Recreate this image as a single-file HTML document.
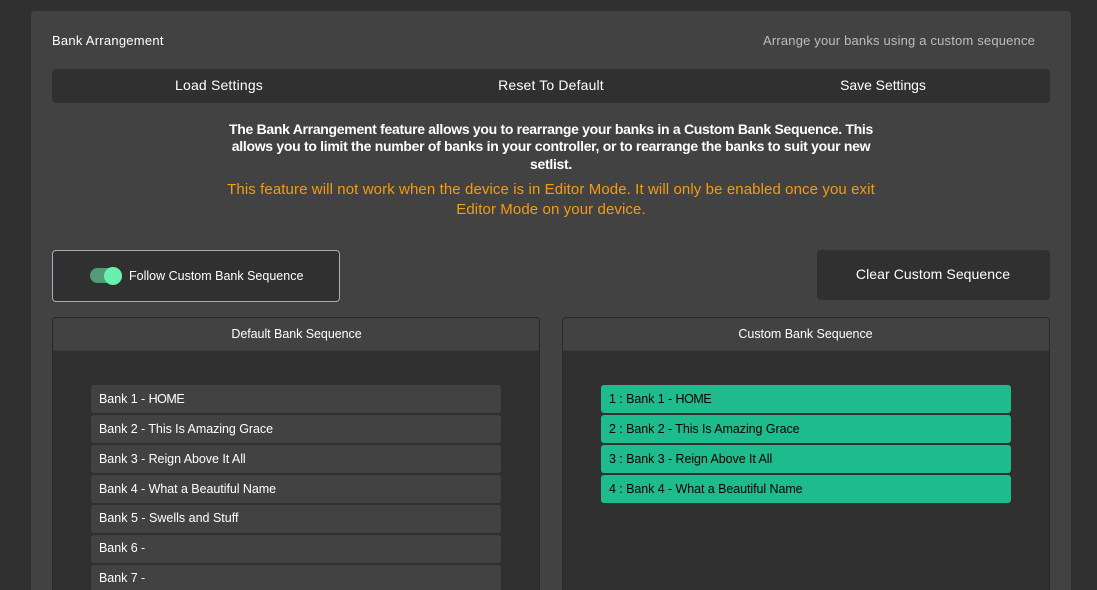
<!DOCTYPE html>
<html>
<head>
<meta charset="utf-8">
<style>
html,body{margin:0;padding:0;width:1097px;height:590px;overflow:hidden;background:#303030;}
body{position:relative;font-family:"Liberation Sans",sans-serif;color:#fff;}
div{position:absolute;box-sizing:border-box;}
.t{white-space:nowrap;line-height:16px;}
.c{transform:translateX(-50%);}
.card{left:31px;top:11px;width:1040px;height:600px;background:#424242;border-radius:4px;}
.bar{background:#303030;border-radius:4px;}
.panel{top:317px;width:488px;height:290px;background:#303030;border:1px solid #292929;border-radius:4px;overflow:hidden;}
.head{left:0;top:0;width:486px;height:33px;background:#424242;border-bottom:1px solid #3a3a3a;}
.i{left:91px;width:410px;height:28px;background:#424242;border-radius:3px;}
.g{left:601px;width:410px;height:28px;background:#1ebc8c;border-radius:3px;}
.it{font-size:12.5px;letter-spacing:-.05px;color:#fff;}
.gt{font-size:12.5px;letter-spacing:-.07px;color:#000;}
.n{letter-spacing:-.45px;}
</style>
</head>
<body>
<div class="card"></div>
<div class="t" style="left:52px;top:33px;font-size:13px;letter-spacing:.25px">Bank Arrangement</div>
<div class="t" style="left:763px;top:33px;font-size:13px;letter-spacing:.18px;color:#bdbdbd">Arrange your banks using a custom sequence</div>

<div class="bar" style="left:52px;top:69px;width:998px;height:34px"></div>
<div class="t c" style="left:219px;top:77px;font-size:14px;letter-spacing:.18px">Load Settings</div>
<div class="t c" style="left:551px;top:77px;font-size:14px;letter-spacing:.15px">Reset To Default</div>
<div class="t c" style="left:883px;top:77px;font-size:14px;letter-spacing:-.05px">Save Settings</div>

<div class="t c" style="left:551px;top:120.5px;font-size:14px;line-height:17.5px;font-weight:bold;letter-spacing:-.3px;text-align:center">The Bank Arrangement feature allows you to rearrange your banks in a Custom Bank Sequence. This<br>allows you to limit the number of banks in your controller, or to rearrange the banks to suit your new<br>setlist.</div>
<div class="t c" style="left:551px;top:180px;font-size:15px;line-height:20px;color:#f39c12;letter-spacing:.1px;text-align:center">This feature will not work when the device is in Editor Mode. It will only be enabled once you exit<br>Editor Mode on your device.</div>

<div class="bar" style="left:52px;top:250px;width:288px;height:52px;border:1px solid #a9aeb7"></div>
<div style="left:90px;top:268px;width:32px;height:15px;border-radius:8px;background:#549a76"></div>
<div style="left:104px;top:267px;width:18px;height:18px;border-radius:50%;background:#69f0ae"></div>
<div class="t" style="left:129px;top:268px;font-size:12.5px">Follow Custom Bank Sequence</div>

<div class="bar" style="left:817px;top:250px;width:233px;height:50px"></div>
<div class="t c" style="left:933px;top:266px;font-size:14px;letter-spacing:.08px">Clear Custom Sequence</div>

<div class="panel" style="left:52px"><div class="head"></div></div>
<div class="panel" style="left:562px"><div class="head"></div></div>
<div class="t c" style="left:296.5px;top:326px;font-size:12.5px;letter-spacing:-.05px">Default Bank Sequence</div>
<div class="t c" style="left:805.5px;top:326px;font-size:12.5px;letter-spacing:-.03px">Custom Bank Sequence</div>

<div class="i" style="top:385px"></div><div class="t it" style="left:99px;top:391px">Bank 1 - <span class="n">HOME</span></div>
<div class="i" style="top:415px"></div><div class="t it" style="left:99px;top:421px">Bank 2 - This Is Amazing Grace</div>
<div class="i" style="top:445px"></div><div class="t it" style="left:99px;top:451px">Bank 3 - Reign Above It All</div>
<div class="i" style="top:475px"></div><div class="t it" style="left:99px;top:481px">Bank 4 - What a Beautiful Name</div>
<div class="i" style="top:505px"></div><div class="t it" style="left:99px;top:510px;letter-spacing:.0px">Bank 5 - Swells and Stuff</div>
<div class="i" style="top:535px"></div><div class="t it" style="left:99px;top:540px">Bank 6 -</div>
<div class="i" style="top:565px"></div><div class="t it" style="left:99px;top:570px">Bank 7 -</div>

<div class="g" style="top:385px"></div><div class="t gt" style="left:609px;top:391px">1 : Bank 1 - <span class="n">HOME</span></div>
<div class="g" style="top:415px"></div><div class="t gt" style="left:609px;top:421px">2 : Bank 2 - This Is Amazing Grace</div>
<div class="g" style="top:445px"></div><div class="t gt" style="left:609px;top:451px">3 : Bank 3 - Reign Above It All</div>
<div class="g" style="top:475px"></div><div class="t gt" style="left:609px;top:481px">4 : Bank 4 - What a Beautiful Name</div>
</body>
</html>
